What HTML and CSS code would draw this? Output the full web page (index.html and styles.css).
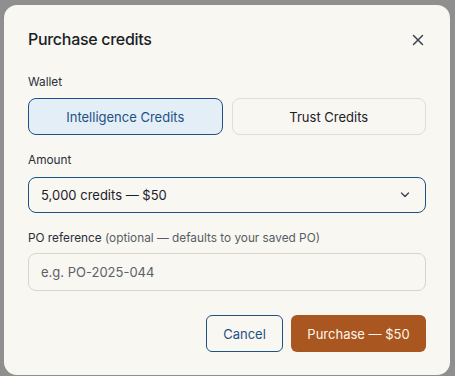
FILE: index.html
```html
<!DOCTYPE html>
<html lang="en">
<head>
<meta charset="utf-8">
<link rel="stylesheet" href="styles.css">
</head>
<body>
<div class="backdrop">
  <div class="modal">
    <div class="header">
      <h2 class="title">Purchase credits</h2>
      <button class="close" aria-label="Close">
        <svg width="12" height="12" viewBox="0 0 12 12"><path d="M1.5 1.5 L10.5 10.5 M10.5 1.5 L1.5 10.5" stroke="#3b4150" stroke-width="1.5" stroke-linecap="round" fill="none"/></svg>
      </button>
    </div>
    <div class="field">
      <div class="label">Wallet</div>
      <div class="wallets">
        <button class="wallet active">Intelligence Credits</button>
        <button class="wallet">Trust Credits</button>
      </div>
    </div>
    <div class="field">
      <div class="label">Amount</div>
      <div class="select">
        <span>5,000 credits — $50</span>
        <svg width="10" height="6" viewBox="0 0 10 6"><path d="M1.5 1 L5 4.5 L8.5 1" stroke="#3b4150" stroke-width="1.3" fill="none" stroke-linecap="round" stroke-linejoin="round"/></svg>
      </div>
    </div>
    <div class="field">
      <div class="label"><span class="strong">PO reference</span> <span class="muted">(optional — defaults to your saved PO)</span></div>
      <div class="input">e.g. PO-2025-044</div>
    </div>
    <div class="footer">
      <button class="btn cancel">Cancel</button>
      <button class="btn primary">Purchase — $50</button>
    </div>
  </div>
</div>
</body>
</html>
```

FILE: styles.css
```css
* { box-sizing: border-box; }
html, body { margin: 0; padding: 0; }
body {
  width: 455px;
  height: 376px;
  overflow: hidden;
  background: #8f8f8f;
  font-family: Inter, "Noto Sans", sans-serif;
  color: #1d2029;
}
.backdrop {
  padding: 5px 5px 0 4px;
}
.modal {
  width: 446px;
  height: 370px;
  background: #f8f7f2;
  border-radius: 13px;
  padding: 24px;
  display: flex;
  flex-direction: column;
}
.header {
  display: flex;
  align-items: center;
  justify-content: space-between;
  height: 20px;
  margin-bottom: 25px;
}
.title {
  margin: 0;
  font-size: 16px;
  font-weight: 500;
  letter-spacing: -0.3px;
  color: #1b1e26;
}
.close {
  border: 0;
  background: none;
  padding: 0;
  width: 12px;
  height: 12px;
  margin-right: 2px;
  margin-top: 1px;
  display: flex;
}
.field { display: flex; flex-direction: column; margin-bottom: 17px; }
.label {
  font-size: 11.8px;
  line-height: 17px;
  color: #2a2f39;
  margin-bottom: 7px;
}
.muted { color: #575c66; }
.wallets {
  display: grid;
  grid-template-columns: 1fr 1fr;
  gap: 9px;
}
.wallet {
  height: 37px;
  border: 1px solid #e1ddd4;
  border-radius: 8px;
  background: #f8f7f2;
  font-family: inherit;
  font-size: 13px;
  color: #1d2029;
}
.wallet.active {
  border: 1.5px solid #1f5185;
  background: #e3eef7;
  color: #1f5185;
}
.select {
  height: 36px;
  border: 1.5px solid #1f5185;
  border-radius: 8px;
  padding: 0 15px 0 12px;
  display: flex;
  align-items: center;
  justify-content: space-between;
  font-size: 13px;
  color: #1d2029;
  margin-top: 1px;
}
.input {
  height: 38px;
  border: 1px solid #d9d5ca;
  border-radius: 8px;
  padding: 0 12px;
  display: flex;
  align-items: center;
  font-size: 13px;
  color: #5c6068;
  margin-top: -1px;
}
.footer {
  display: flex;
  justify-content: flex-end;
  gap: 8px;
  margin-top: 7px;
}
.btn {
  height: 37px;
  border-radius: 6px;
  font-family: inherit;
  font-size: 13px;
  padding: 0 16px;
  white-space: nowrap;
}
.cancel {
  border: 1.5px solid #1f5185;
  background: #f8f7f2;
  color: #1f5185;
  width: 77px;
}
.primary {
  border: 0;
  background: #aa5620;
  color: #fff5ec;
  width: 135px;
}
```
